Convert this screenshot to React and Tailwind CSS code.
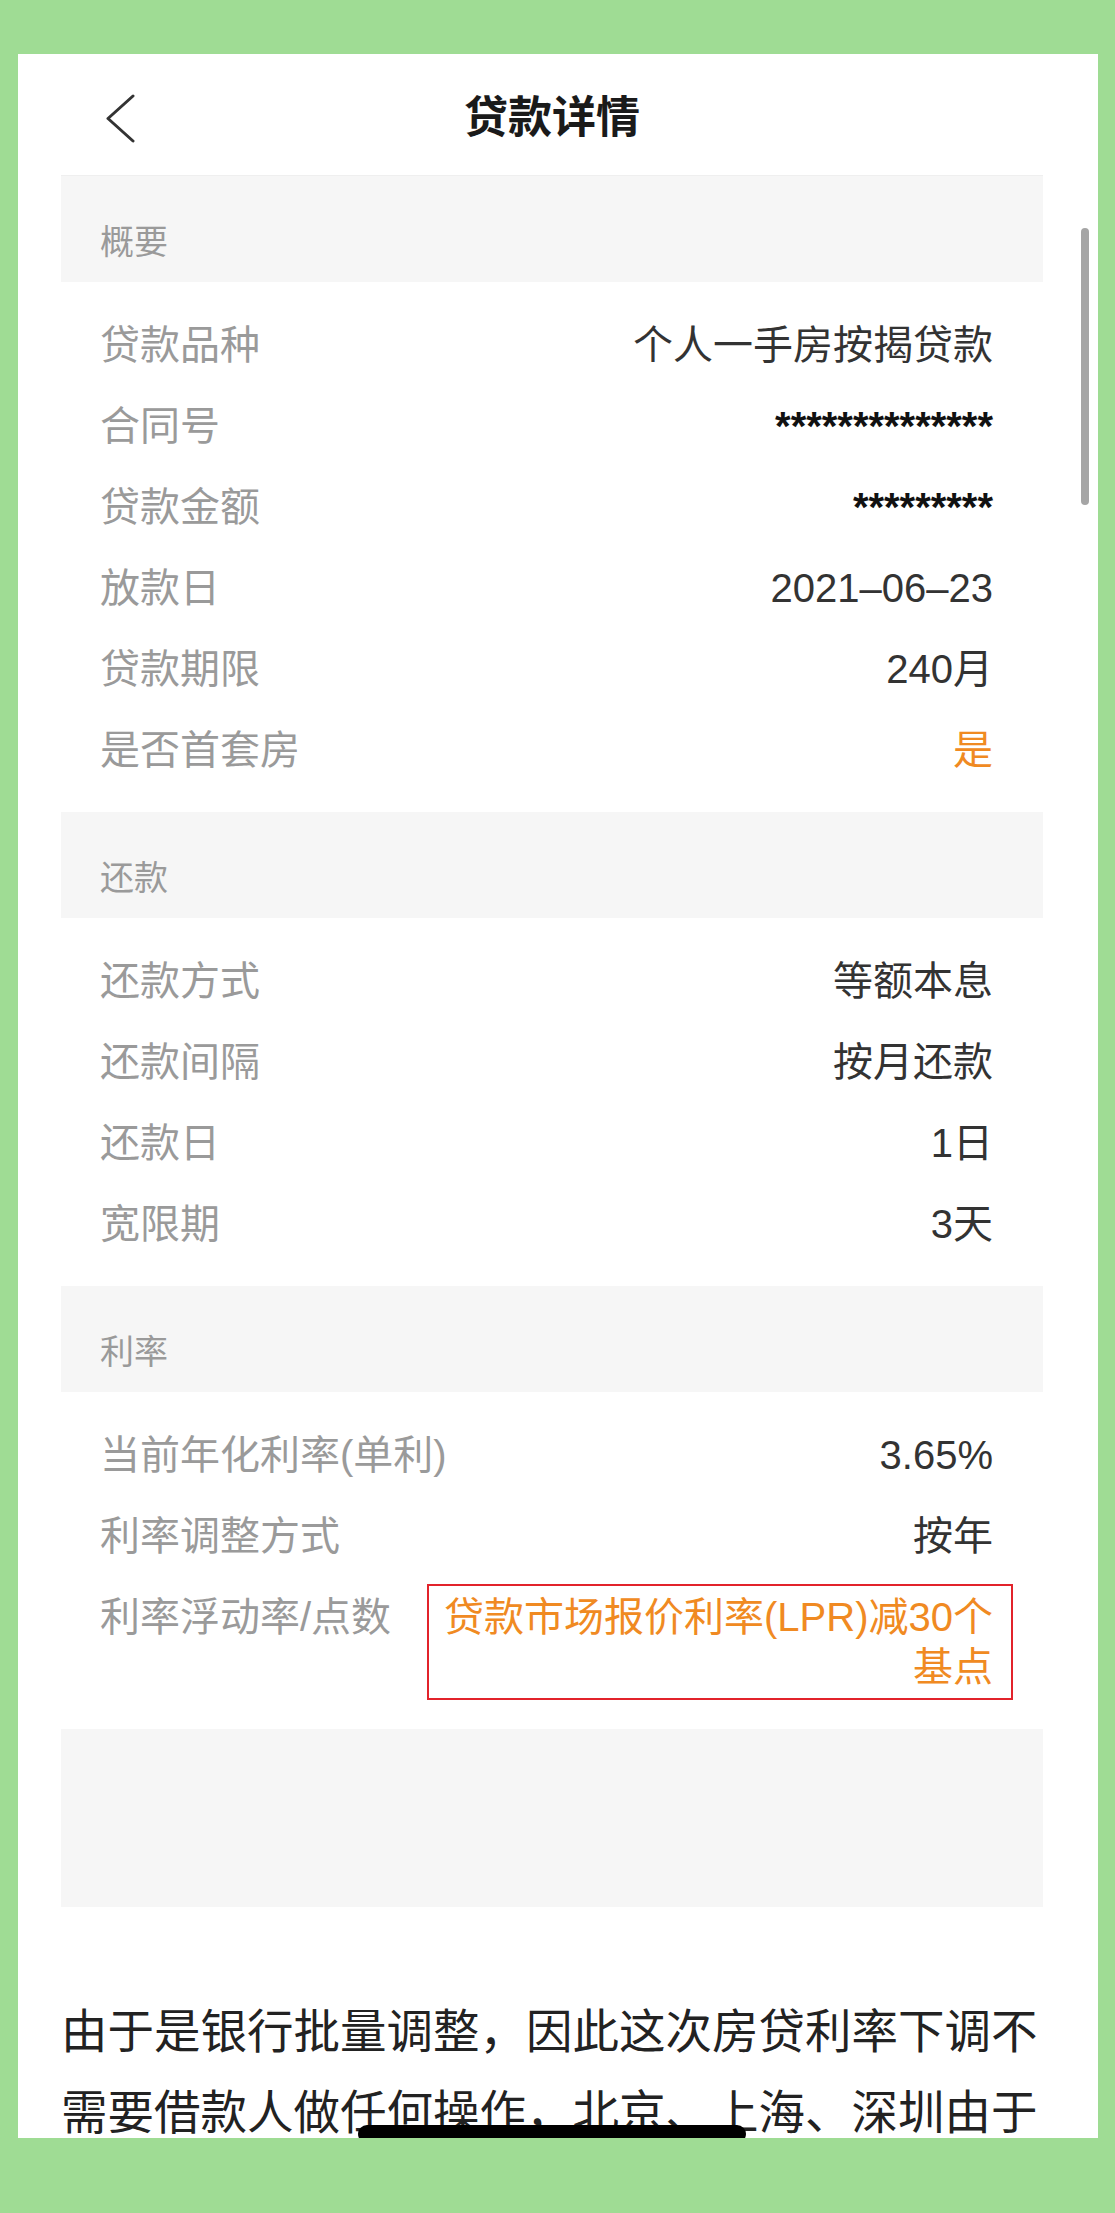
import React from 'react';

const sections = [
  {
    title: '概要',
    rows: [
      { label: '贷款品种', value: '个人一手房按揭贷款' },
      { label: '合同号', value: '**************', mask: true },
      { label: '贷款金额', value: '*********', mask: true },
      { label: '放款日', value: '2021–06–23' },
      { label: '贷款期限', value: '240月' },
      { label: '是否首套房', value: '是', accent: true },
    ],
  },
  {
    title: '还款',
    rows: [
      { label: '还款方式', value: '等额本息' },
      { label: '还款间隔', value: '按月还款' },
      { label: '还款日', value: '1日' },
      { label: '宽限期', value: '3天' },
    ],
  },
  {
    title: '利率',
    rows: [
      { label: '当前年化利率(单利)', value: '3.65%' },
      { label: '利率调整方式', value: '按年' },
      { label: '利率浮动率/点数', value: '贷款市场报价利率(LPR)减30个基点', accent: true, marked: true },
    ],
  },
];

function BackIcon() {
  return (
    <svg width="30" height="50" viewBox="0 0 30 50" fill="none">
      <polyline
        points="27,3 2,25.5 27,48"
        stroke="#333"
        strokeWidth="3"
        strokeLinecap="round"
        strokeLinejoin="round"
      />
    </svg>
  );
}

function Row({ label, value, mask, accent, marked }) {
  if (marked) {
    return (
      <div className="flex items-start justify-between py-[15.5px]">
        <span className="shrink-0 text-[#9a9a9a]">{label}</span>
        <div className="relative w-[560px] text-right text-[#f08a22]">
          {value}
          {/* highlight frame */}
          <span className="pointer-events-none absolute -top-[8px] -bottom-[8px] -left-[6px] -right-[20px] border-2 border-[#e2232b]" />
        </div>
      </div>
    );
  }
  return (
    <div className="flex items-start justify-between py-[15.5px]">
      <span className="shrink-0 text-[#9a9a9a]">{label}</span>
      <span
        className={
          accent ? 'text-[#f08a22]' : mask ? 'font-bold text-[#111]' : 'text-[#333]'
        }
      >
        {value}
      </span>
    </div>
  );
}

function Section({ title, rows }) {
  return (
    <div>
      <div className="flex h-[106px] items-center bg-[#f6f6f6] pl-[39px] pt-[26px] text-[34px] leading-[34px] text-[#9a9a9a]">
        {title}
      </div>
      <div className="py-[22px] pl-[39px] pr-[50px] text-[40px] leading-[50px]">
        {rows.map((r) => (
          <Row key={r.label} {...r} />
        ))}
      </div>
    </div>
  );
}

export default function App() {
  return (
    <div className="min-h-[2213px] w-[1115px] bg-[#9fdc94] pl-[18px] pr-[17px] pt-[54px] font-[family-name:'Liberation_Sans','Noto_Sans_CJK_SC',sans-serif]">
      <div className="relative h-[2084px] overflow-hidden bg-white">
        <div className="ml-[43px] w-[982px]">
          {/* nav bar */}
          <div className="grid h-[122px] grid-cols-[1fr_auto_1fr] items-center border-b border-[#efefef] pt-[6px]">
            <div className="pl-[45px]">
              <BackIcon />
            </div>
            <h1 className="text-[44px] font-bold leading-[50px] text-[#1a1a1a]">贷款详情</h1>
            <div />
          </div>

          {sections.map((s) => (
            <Section key={s.title} {...s} />
          ))}

          <div className="h-[178px] bg-[#f6f6f6]" />

          <p className="mt-[84.5px] text-[46.5px] leading-[81px] text-[#222]">
            由于是银行批量调整，因此这次房贷利率下调不需要借款人做任何操作，北京、上海、深圳由于
          </p>
        </div>

        {/* scroll indicator */}
        <div className="absolute right-[9px] top-[174px] h-[277px] w-[8px] rounded-full bg-[#a5a5a5]" />

        {/* home indicator */}
        <div className="absolute -bottom-[5px] left-[340px] h-[18px] w-[388px] rounded-full bg-black" />
      </div>
    </div>
  );
}
